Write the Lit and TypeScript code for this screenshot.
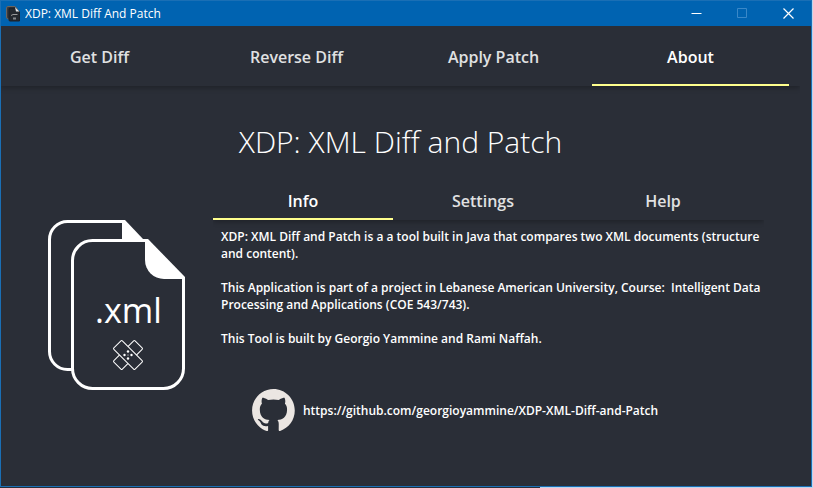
import { LitElement, html, css, svg } from "lit";
import { customElement, property, state } from "lit/decorators.js";

const fontStack = css`"Open Sans", "Noto Sans", sans-serif`;

@customElement("title-bar")
class TitleBar extends LitElement {
  @property() heading = "";

  static styles = css`
    :host {
      display: flex;
      align-items: center;
      height: 25px;
      background: #0063b1;
      color: #ffffff;
      font: 12px/16px ${fontStack};
    }
    .icon {
      flex: none;
      margin: 0 5px 0 5px;
    }
    .heading {
      flex: 1;
      min-width: 0;
      white-space: nowrap;
      overflow: hidden;
      text-overflow: ellipsis;
    }
    .control {
      display: flex;
      align-items: center;
      justify-content: center;
      width: 46px;
      height: 25px;
      padding: 0;
      border: 0;
      background: none;
      color: inherit;
    }
    .control:disabled {
      color: #3a88c8;
    }
    .glyph {
      display: block;
      fill: none;
      stroke: currentColor;
    }
  `;

  render() {
    return html`
      <svg class="icon" width="14" height="16" viewBox="0 0 14 16" aria-hidden="true">
        <path d="M2 .5h7l2 2V13H2.500Q.5 13 .5 11V2Q.5.5 2 .5z" fill="#3a3a3e" stroke="#6a6460" />
        <path d="M4 2h6l3.500 3.500V15H4Q3 15 3 14V3Q3 2 4 2z" fill="#25292f" stroke="#1d2127" />
        <path d="M9 1l4.500 4.500H10z" fill="#e8e8e8" />
        <path d="M5 9.500L7 8.500h4.500" stroke="#9a9a9a" fill="none" />
        <path d="M7 12.500h3" stroke="#85888c" stroke-width="2" />
      </svg>
      <span class="heading">${this.heading}</span>
      <button class="control" aria-label="Minimize">
        <svg class="glyph" width="11" height="11" viewBox="0 0 11 11"><path d="M.5 5.500h10" /></svg>
      </button>
      <button class="control" aria-label="Maximize" disabled>
        <svg class="glyph" width="11" height="11" viewBox="0 0 11 11"><path d="M.5.5h9v9h-9z" /></svg>
      </button>
      <button class="control" aria-label="Close">
        <svg class="glyph" width="11" height="11" viewBox="0 0 11 11"><path d="M.5.5l10 10M10.500.5l-10 10" stroke-width="1.200" /></svg>
      </button>
    `;
  }
}

@customElement("tab-strip")
class TabStrip extends LitElement {
  @property({ attribute: false }) tabs: string[] = [];
  @property() active = "";

  static styles = css`
    :host {
      display: block;
      box-shadow: 0 2px 5px rgba(0, 0, 0, 0.26);
      clip-path: inset(0 0 -8px 0);
    }
    .tabs {
      display: flex;
      height: 100%;
      padding-right: 11px;
      box-sizing: border-box;
    }
    .tab {
      flex: 1;
      padding: 3px 0 0;
      border: 0;
      border-bottom: 2px solid transparent;
      background: none;
      color: #e0e1e2;
      font: 650 16px/24px ${fontStack};
    }
    .tab.active {
      color: #ffffff;
      border-bottom-color: #ffff8d;
    }
  `;

  private pick(tab: string) {
    this.dispatchEvent(new CustomEvent("pick", { detail: tab }));
  }

  render() {
    return html`
      <div class="tabs" role="tablist">
        ${this.tabs.map(
          (tab) => html`<button
            class="tab ${tab === this.active ? "active" : ""}"
            role="tab"
            aria-selected=${tab === this.active}
            @click=${() => this.pick(tab)}
          >${tab}</button>`,
        )}
      </div>
    `;
  }
}

const bandage = svg`
  <g fill="#2a2e37" stroke="#ffffff" stroke-width="1">
    <rect x="-15" y="-6" width="30" height="12" rx="1" transform="rotate(-45)" />
    <rect x="-15" y="-6" width="30" height="12" rx="1" transform="rotate(45)" />
  </g>
  <g fill="#ffffff">
    <circle cx="0" cy="-3.500" r="1.200" />
    <circle cx="-3.500" cy="0" r="1.200" />
    <circle cx="3.500" cy="0" r="1.200" />
    <circle cx="0" cy="3.500" r="1.200" />
    <circle cx="0" cy="0" r=".6" />
  </g>
`;

@customElement("app-root")
class AppRoot extends LitElement {
  @state() private section = "About";
  @state() private page = "Info";

  static styles = css`
    :host {
      display: block;
      box-sizing: border-box;
      min-height: 100vh;
      padding: 0 1px 1px 0;
      background: linear-gradient(90deg, #2a2e37 540px, #bcd6ee 540px);
      font-family: ${fontStack};
      color: #ffffff;
    }
    .window {
      display: flex;
      flex-direction: column;
      box-sizing: border-box;
      min-height: calc(100vh - 1px);
      border: 1px solid #1a6fb5;
      background: #2a2e37;
    }
    .sections {
      height: 60px;
      margin-right: 11px;
    }
    .title {
      margin: 35px 11px 17px 0;
      font-size: 30px;
      line-height: 42px;
      font-weight: 300;
      text-align: center;
    }
    .body {
      display: grid;
      grid-template-columns: auto 1fr;
      column-gap: 28px;
      padding: 0 47px;
    }
    .logo {
      display: block;
      margin-top: 40px;
    }
    .logo-text {
      font: 400 34px ${fontStack};
    }
    .pages {
      height: 40px;
    }
    .info {
      padding: 8px 0 8px 8px;
      font-size: 12px;
      line-height: 17px;
      font-weight: 600;
    }
    .info p {
      margin: 0 0 17px;
      white-space: pre-wrap;
    }
    .repo {
      display: flex;
      align-items: center;
      gap: 8px;
      width: max-content;
      margin: 42px 0 0 31px;
      color: inherit;
      text-decoration: none;
    }
  `;

  render() {
    return html`
      <div class="window">
        <title-bar heading="XDP: XML Diff And Patch"></title-bar>
        <tab-strip
          class="sections"
          .tabs=${["Get Diff", "Reverse Diff", "Apply Patch", "About"]}
          active=${this.section}
          @pick=${(e: CustomEvent) => (this.section = e.detail)}
        ></tab-strip>
        <h1 class="title">XDP: XML Diff and Patch</h1>
        <div class="body">
          <svg class="logo" width="137" height="170" viewBox="0 0 137 170" role="img" aria-label="XML files">
            <path d="M24 149.500H19.500A18 18 0 0 1 1.500 131.500V19.500A18 18 0 0 1 19.500 1.500H75.500" fill="none" stroke="#ffffff" stroke-width="3" />
            <path d="M74 0h3l18 19H74z" fill="#ffffff" />
            <path d="M99 20.500H44.500A20 20 0 0 0 24.500 40.500V148.500A20 20 0 0 0 44.500 168.500H115.500A20 20 0 0 0 135.500 148.500V57" fill="none" stroke="#ffffff" stroke-width="3" />
            <path d="M97 19h3l37 38v2h-21A19 19 0 0 1 97 40z" fill="#ffffff" />
            <text class="logo-text" x="47" y="103" fill="#ffffff">.xml</text>
            <g transform="translate(80 135)">${bandage}</g>
          </svg>
          <section>
            <tab-strip
              class="pages"
              .tabs=${["Info", "Settings", "Help"]}
              active=${this.page}
              @pick=${(e: CustomEvent) => (this.page = e.detail)}
            ></tab-strip>
            <div class="info" role="tabpanel">
              <p>XDP: XML Diff and Patch is a a tool built in Java that compares two XML documents (structure and content).</p>
              <p>This Application is part of a project in Lebanese American University, Course:  Intelligent Data Processing and Applications (COE 543/743).</p>
              <p>This Tool is built by Georgio Yammine and Rami Naffah.</p>
              <a class="repo" href="https://github.com/georgioyammine/XDP-XML-Diff-and-Patch">
                <svg width="43" height="42" viewBox="0 0 98 96" aria-hidden="true">
                  <path fill="#ebe6e2" fill-rule="evenodd" d="M48.854 0C21.839 0 0 22 0 49.217c0 21.756 13.993 40.172 33.405 46.69 2.427.49 3.316-1.059 3.316-2.362 0-1.141-.08-5.052-.08-9.127-13.590 2.934-16.420-5.867-16.420-5.867-2.184-5.704-5.420-7.170-5.420-7.170-4.448-3.015.324-3.015.324-3.015 4.934.326 7.523 5.052 7.523 5.052 4.367 7.496 11.404 5.378 14.235 4.074.404-3.178 1.699-5.378 3.074-6.600-10.839-1.141-22.243-5.378-22.243-24.283 0-5.378 1.940-9.778 5.014-13.200-.485-1.222-2.184-6.275.486-13.038 0 0 4.125-1.304 13.426 5.052a46.970 46.970 0 0 1 12.214-1.630c4.125 0 8.330.571 12.213 1.630 9.302-6.356 13.427-5.052 13.427-5.052 2.670 6.763.970 11.816.485 13.038 3.155 3.422 5.015 7.822 5.015 13.200 0 18.905-11.404 23.060-22.324 24.283 1.780 1.548 3.316 4.481 3.316 9.126 0 6.600-.080 11.897-.080 13.526 0 1.304.890 2.853 3.316 2.364 19.412-6.520 33.405-24.935 33.405-46.691C97.707 22 75.788 0 48.854 0z" />
                </svg>
                <span>https://github.com/georgioyammine/XDP-XML-Diff-and-Patch</span>
              </a>
            </div>
          </section>
        </div>
      </div>
    `;
  }
}
